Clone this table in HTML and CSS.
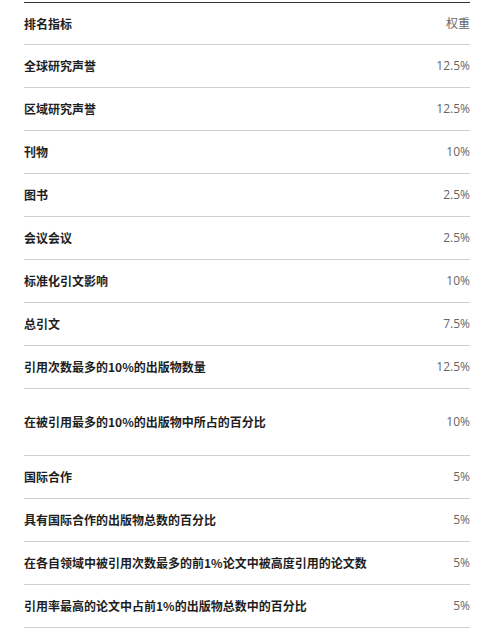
FILE: index.html
```html
<!DOCTYPE html>
<html lang="zh">
<head>
  <meta charset="UTF-8">
  <title>排名指标</title>
  <link rel="stylesheet" href="styles.css">
</head>
<body>

  <table class="rank-table">
    <tbody>
      <tr><td class="name">排名指标</td><td class="weight">权重</td></tr>
      <tr><td class="name">全球研究声誉</td><td class="weight">12.5%</td></tr>
      <tr><td class="name">区域研究声誉</td><td class="weight">12.5%</td></tr>
      <tr><td class="name">刊物</td><td class="weight">10%</td></tr>
      <tr><td class="name">图书</td><td class="weight">2.5%</td></tr>
      <tr><td class="name">会议会议</td><td class="weight">2.5%</td></tr>
      <tr><td class="name">标准化引文影响</td><td class="weight">10%</td></tr>
      <tr><td class="name">总引文</td><td class="weight">7.5%</td></tr>
      <tr><td class="name">引用次数最多的10%的出版物数量</td><td class="weight">12.5%</td></tr>
      <tr class="tall"><td class="name">在被引用最多的10%的出版物中所占的百分比</td><td class="weight">10%</td></tr>
      <tr><td class="name">国际合作</td><td class="weight">5%</td></tr>
      <tr><td class="name">具有国际合作的出版物总数的百分比</td><td class="weight">5%</td></tr>
      <tr><td class="name">在各自领域中被引用次数最多的前1%论文中被高度引用的论文数</td><td class="weight">5%</td></tr>
      <tr><td class="name">引用率最高的论文中占前1%的出版物总数中的百分比</td><td class="weight">5%</td></tr>
    </tbody>
  </table>

</body>
</html>
```

FILE: styles.css
```css
body { margin: 0; background: #fff; font-family: "Noto Sans CJK SC", "Noto Sans", sans-serif; }
.rank-table { width: 446px; margin: 2px 0 0 24px; border-collapse: collapse; border-top: 1px solid #333; }
.rank-table tr { height: 43px; border-bottom: 1px solid #d0d0d0; }
.rank-table tr:first-child { height: 42px; }
.rank-table tr.tall { height: 67px; }
.rank-table td { padding: 0; vertical-align: middle; font-size: 12px; line-height: 16px; }
.name { color: #1e1e1e; font-weight: bold; text-align: left; }
.weight { color: #666; text-align: right; font-family: "Open Sans", "Noto Sans CJK SC", sans-serif; white-space: nowrap; }
```
